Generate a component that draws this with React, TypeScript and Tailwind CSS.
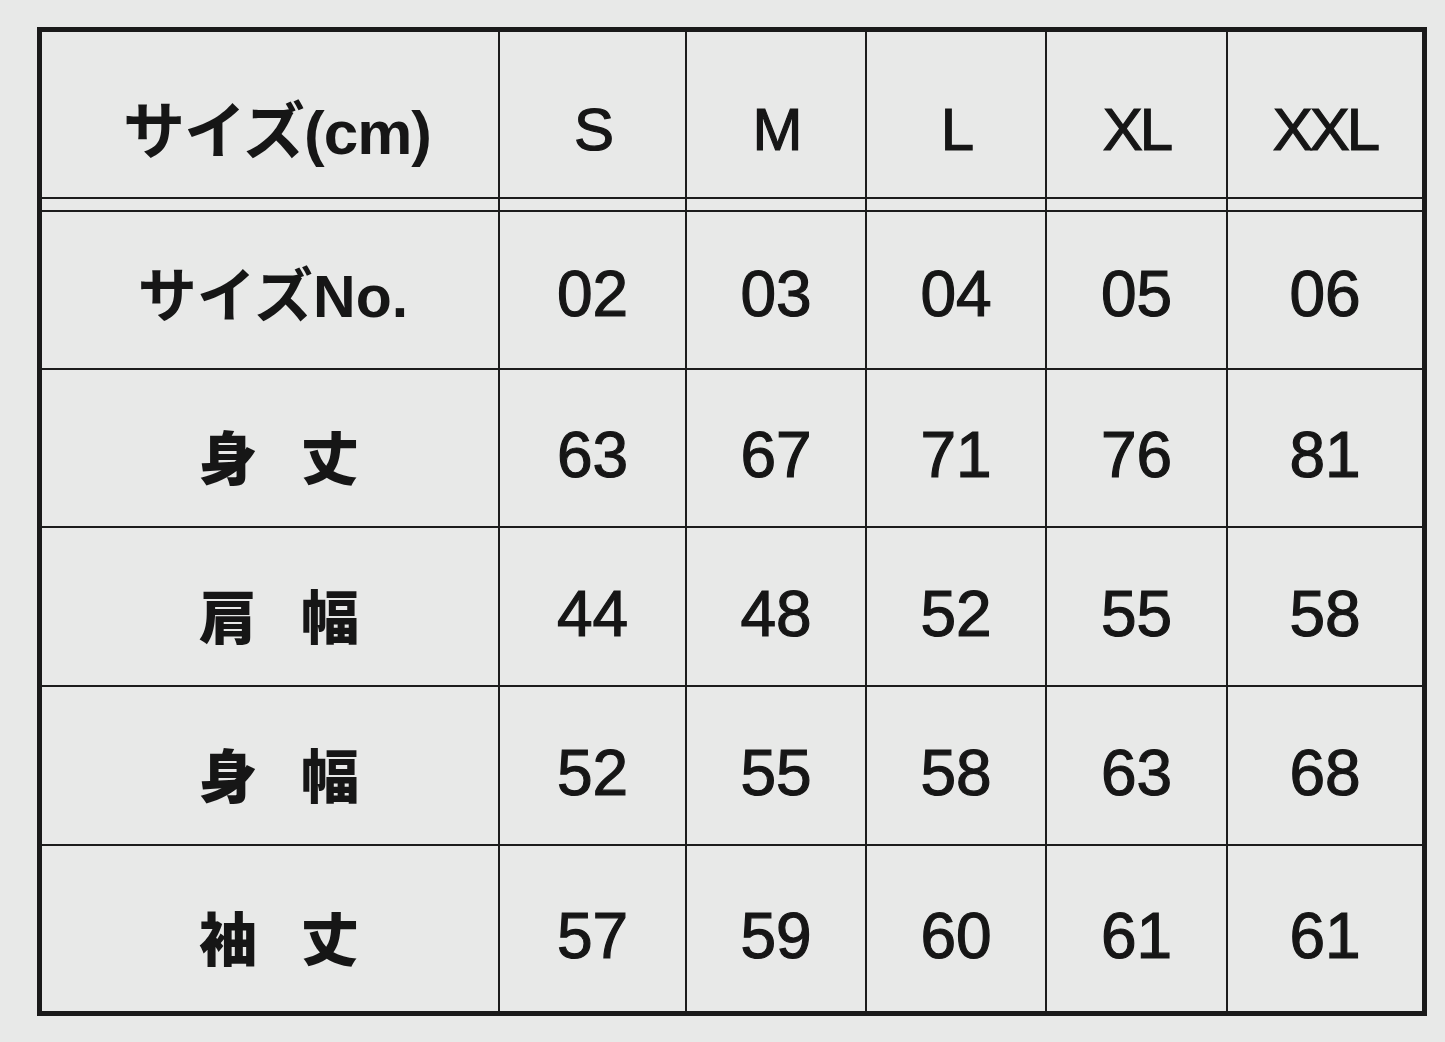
import React from "react";

const cols = ["S", "M", "L", "XL", "XXL"];
const rows: { label: string[]; values: string[]; h: string }[] = [
  { label: ["身", "丈"], values: ["63", "67", "71", "76", "81"], h: "h-[158px]" },
  { label: ["肩", "幅"], values: ["44", "48", "52", "55", "58"], h: "h-[159px]" },
  { label: ["身", "幅"], values: ["52", "55", "58", "63", "68"], h: "h-[159px]" },
  { label: ["袖", "丈"], values: ["57", "59", "60", "61", "61"], h: "h-[165px]" },
];

const widths = ["w-[458px]", "w-[187px]", "w-[180px]", "w-[180px]", "w-[181px]", "w-[194px]"];

const latin = "font-['Liberation_Sans','Noto_Sans_CJK_JP',sans-serif]";
const jp = "font-['Noto_Sans_CJK_JP',sans-serif]";
const stroke = "[-webkit-text-stroke:1.2px_#161616]";

function Cell({
  i,
  children,
  bottom,
  h,
  pt = "pt-[14px]",
}: {
  i: number;
  children?: React.ReactNode;
  bottom?: boolean;
  h: string;
  pt?: string;
}) {
  return (
    <div
      className={`${widths[i]} ${h} ${pt} flex items-center justify-center border-[#1c1c1c] ${
        i < 5 ? "border-r-2" : ""
      } ${bottom ? "border-b-2" : ""}`}
    >
      {children}
    </div>
  );
}

export default function App() {
  return (
    <div className="w-[1445px] h-[1042px] bg-[#e8e9e8] pt-[27px] pl-[37px] text-[#161616]">
      <div className="w-[1390px] border-[5px] border-[#1a1a1a] flex flex-col">
        {/* header */}
        <div className="flex">
          <Cell i={0} h="h-[167px]" bottom pt="pt-[30px]">
            <span className={`${latin} font-bold text-[62px] leading-none tracking-[-1px] pl-[14px]`}>
              <span className={jp}>サイズ</span>(cm)
            </span>
          </Cell>
          {cols.map((c, k) => (
            <Cell key={c} i={k + 1} h="h-[167px]" bottom pt="pt-[30px]">
              <span className={`${latin} ${stroke} text-[60px] leading-none tracking-[-3px]`}>{c}</span>
            </Cell>
          ))}
        </div>
        {/* double line spacer */}
        <div className="flex">
          {widths.map((_, k) => (
            <Cell key={k} i={k} h="h-[13px]" bottom pt="pt-0" />
          ))}
        </div>
        {/* size no */}
        <div className="flex">
          <Cell i={0} h="h-[158px]" bottom pt="pt-[8px]">
            <span className={`${latin} font-bold text-[59px] leading-none pl-[6px]`}>
              <span className={jp}>サイズ</span>No.
            </span>
          </Cell>
          {["02", "03", "04", "05", "06"].map((v, k) => (
            <Cell key={k} i={k + 1} h="h-[158px]" bottom pt="pt-[8px]">
              <span className={`${latin} ${stroke} text-[64px] leading-none`}>{v}</span>
            </Cell>
          ))}
        </div>
        {rows.map((r, ri) => (
          <div className="flex" key={ri}>
            <Cell i={0} h={r.h} bottom={ri < rows.length - 1}>
              <span className={`${jp} font-black text-[58px] leading-none flex gap-[44px] pl-[18px]`}>
                <span>{r.label[0]}</span>
                <span>{r.label[1]}</span>
              </span>
            </Cell>
            {r.values.map((v, k) => (
              <Cell key={k} i={k + 1} h={r.h} bottom={ri < rows.length - 1}>
                <span className={`${latin} ${stroke} text-[64px] leading-none`}>{v}</span>
              </Cell>
            ))}
          </div>
        ))}
      </div>
    </div>
  );
}
